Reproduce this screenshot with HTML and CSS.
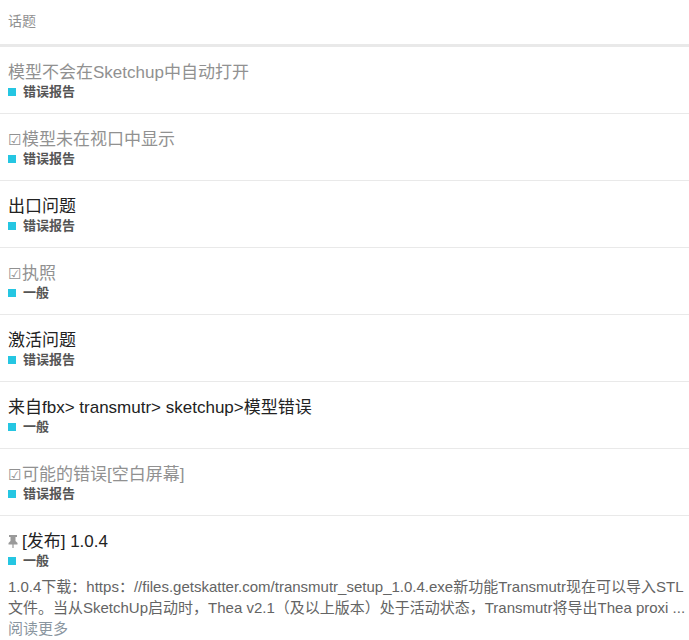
FILE: index.html
```html
<!DOCTYPE html>
<html lang="zh-CN">
<head>
    <meta charset="UTF-8">
    <title>话题</title>
    <link rel="stylesheet" href="styles.css">
</head>
<body>
    <div class="topic-list">
        <div class="topic-list-header">话题</div>

        <div class="topic-row visited">
            <a class="title" href="#">模型不会在Sketchup中自动打开</a>
            <div class="category"><span class="badge"></span>错误报告</div>
        </div>

        <div class="topic-row visited">
            <a class="title" href="#"><span class="status">&#9745;</span>模型未在视口中显示</a>
            <div class="category"><span class="badge"></span>错误报告</div>
        </div>

        <div class="topic-row">
            <a class="title" href="#">出口问题</a>
            <div class="category"><span class="badge"></span>错误报告</div>
        </div>

        <div class="topic-row visited">
            <a class="title" href="#"><span class="status">&#9745;</span>执照</a>
            <div class="category"><span class="badge"></span>一般</div>
        </div>

        <div class="topic-row">
            <a class="title" href="#">激活问题</a>
            <div class="category"><span class="badge"></span>错误报告</div>
        </div>

        <div class="topic-row">
            <a class="title" href="#">来自fbx&gt; transmutr&gt; sketchup&gt;模型错误</a>
            <div class="category"><span class="badge"></span>一般</div>
        </div>

        <div class="topic-row visited">
            <a class="title" href="#"><span class="status">&#9745;</span>可能的错误[空白屏幕]</a>
            <div class="category"><span class="badge"></span>错误报告</div>
        </div>

        <div class="topic-row pinned">
            <a class="title" href="#"><svg class="pin" width="10" height="13" viewBox="0 0 10 13"><path d="M1 0h8v2H7.5v4L9.5 8v1.5H5.6V13H4.4V9.5H0.5V8L2.5 6V2H1z" fill="#9a9a9a"/></svg>[发布] 1.0.4</a>
            <div class="category"><span class="badge"></span>一般</div>
            <div class="excerpt">1.0.4下载：https：//files.getskatter.com/transmutr_setup_1.0.4.exe新功能Transmutr现在可以导入STL文件。当从SketchUp启动时，Thea v2.1（及以上版本）处于活动状态，Transmutr将导出Thea proxi ...</div>
            <a class="read-more" href="#">阅读更多</a>
        </div>
    </div>
</body>
</html>
```

FILE: styles.css
```css
body {
    margin: 0;
    padding: 0;
    background: #ffffff;
    font-family: 'Liberation Sans', Arial, 'Noto Sans CJK SC', sans-serif;
    color: #222222;
}
.topic-list {
    width: 100%;
}
.topic-list-header {
    padding: 11px 8px 13px;
    font-size: 14px;
    line-height: 20px;
    color: #919191;
    border-bottom: 3px solid #e9e9e9;
}
.topic-row {
    padding: 16px 0 13px 8px;
    border-bottom: 1px solid #e9e9e9;
}
.title {
    display: block;
    font-size: 17px;
    line-height: 20px;
    color: #222222;
    text-decoration: none;
}
.visited .title {
    color: #919191;
}
.status {
    font-size: 15px;
    color: #919191;
    margin-right: 1px;
}
.pin {
    margin-right: 4px;
    vertical-align: -1px;
}
.category {
    display: flex;
    align-items: center;
    margin-top: 1px;
    font-size: 13px;
    line-height: 16px;
    font-weight: bold;
    color: #555555;
}
.badge {
    width: 8px;
    height: 8px;
    background: #25c6e2;
    margin-right: 7px;
}
.excerpt {
    margin-top: 7px;
    font-size: 15px;
    line-height: 21px;
    color: #646464;
}
.read-more {
    display: block;
    font-size: 15px;
    line-height: 21px;
    color: #8a96a0;
    text-decoration: none;
}
```
